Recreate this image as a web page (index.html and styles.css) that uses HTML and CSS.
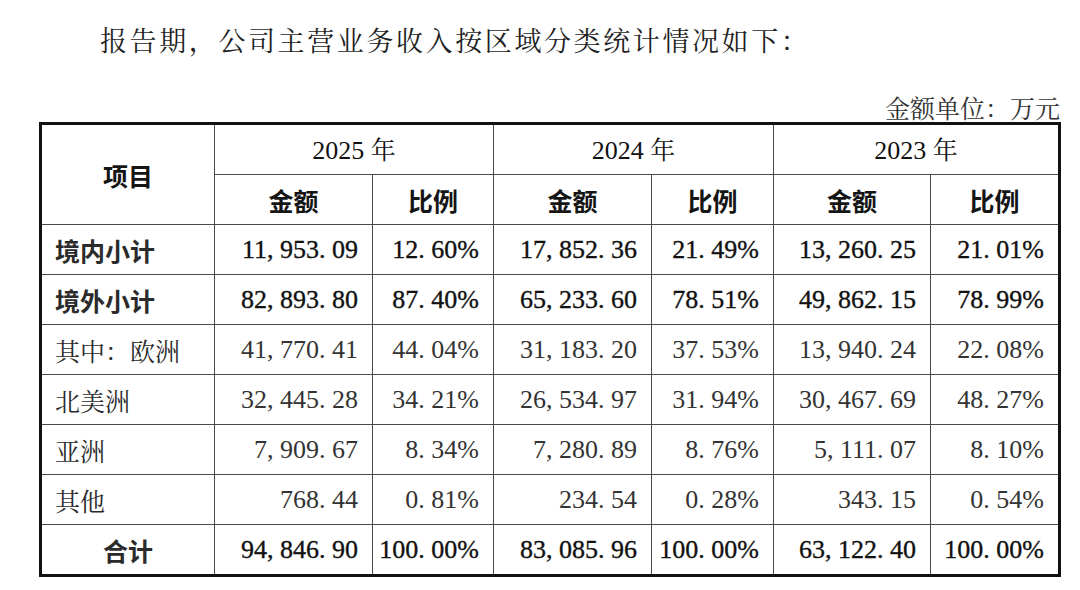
FILE: index.html
```html
<!DOCTYPE html>
<html lang="zh-CN">
<head>
<meta charset="utf-8">
<title>主营业务收入按区域分类</title>
<link rel="stylesheet" href="styles.css">
</head>
<body>
<div class="page">
  <p class="intro">报告期，公司主营业务收入按区域分类统计情况如下：</p>
  <p class="unit">金额单位：万元</p>
  <table class="data">
    <colgroup>
      <col class="c-label">
      <col class="c-amt">
      <col class="c-pct">
      <col class="c-amt">
      <col class="c-pct2">
      <col class="c-amt3">
      <col class="c-pct3">
    </colgroup>
    <thead>
      <tr class="h1">
        <th rowspan="2" class="hei">项目</th>
        <th colspan="2" class="year"><span class="num">2025</span> 年</th>
        <th colspan="2" class="year"><span class="num">2024</span> 年</th>
        <th colspan="2" class="year"><span class="num">2023</span> 年</th>
      </tr>
      <tr class="h2">
        <th class="hei">金额</th><th class="hei">比例</th>
        <th class="hei">金额</th><th class="hei">比例</th>
        <th class="hei">金额</th><th class="hei">比例</th>
      </tr>
    </thead>
    <tbody>
      <tr class="strong">
        <td class="label hei">境内小计</td>
        <td class="n">11, 953. 09</td><td class="n">12. 60%</td>
        <td class="n">17, 852. 36</td><td class="n">21. 49%</td>
        <td class="n">13, 260. 25</td><td class="n">21. 01%</td>
      </tr>
      <tr class="strong">
        <td class="label hei">境外小计</td>
        <td class="n">82, 893. 80</td><td class="n">87. 40%</td>
        <td class="n">65, 233. 60</td><td class="n">78. 51%</td>
        <td class="n">49, 862. 15</td><td class="n">78. 99%</td>
      </tr>
      <tr>
        <td class="label">其中：欧洲</td>
        <td class="n">41, 770. 41</td><td class="n">44. 04%</td>
        <td class="n">31, 183. 20</td><td class="n">37. 53%</td>
        <td class="n">13, 940. 24</td><td class="n">22. 08%</td>
      </tr>
      <tr>
        <td class="label">北美洲</td>
        <td class="n">32, 445. 28</td><td class="n">34. 21%</td>
        <td class="n">26, 534. 97</td><td class="n">31. 94%</td>
        <td class="n">30, 467. 69</td><td class="n">48. 27%</td>
      </tr>
      <tr>
        <td class="label">亚洲</td>
        <td class="n">7, 909. 67</td><td class="n">8. 34%</td>
        <td class="n">7, 280. 89</td><td class="n">8. 76%</td>
        <td class="n">5, 111. 07</td><td class="n">8. 10%</td>
      </tr>
      <tr>
        <td class="label">其他</td>
        <td class="n">768. 44</td><td class="n">0. 81%</td>
        <td class="n">234. 54</td><td class="n">0. 28%</td>
        <td class="n">343. 15</td><td class="n">0. 54%</td>
      </tr>
      <tr class="strong total">
        <td class="label center hei">合计</td>
        <td class="n">94, 846. 90</td><td class="n">100. 00%</td>
        <td class="n">83, 085. 96</td><td class="n">100. 00%</td>
        <td class="n">63, 122. 40</td><td class="n">100. 00%</td>
      </tr>
    </tbody>
  </table>
</div>
</body>
</html>
```

FILE: styles.css
```css
html, body {
  margin: 0;
  padding: 0;
  background: #ffffff;
}

body {
  font-family: "Noto Serif CJK SC", "Noto Sans CJK SC", serif;
  color: #222;
}

.page {
  width: 1080px;
  height: 590px;
  overflow: hidden;
}

.intro {
  margin: 0;
  padding: 24px 0 0 100px;
  font-size: 27px;
  line-height: 32px;
  letter-spacing: 2.6px;
  color: #1e1e1e;
}

.unit {
  margin: 36px 0 0 0;
  padding-right: 20px;
  text-align: right;
  font-size: 25px;
  line-height: 30px;
  color: #333;
}

.data {
  margin-left: 39px;
  width: 1019px;
  table-layout: fixed;
  border-collapse: collapse;
  border: 3px solid #111;
}

.c-label { width: 174px; }
.c-amt { width: 158px; }
.c-pct { width: 121px; }
.c-pct2 { width: 122px; }
.c-amt3 { width: 157px; }
.c-pct3 { width: 129px; }

.data th,
.data td {
  border: 1.5px solid #4a4a4a;
  padding: 0;
  vertical-align: middle;
  font-size: 25px;
  line-height: 30px;
  white-space: nowrap;
}

.data tr { height: 50px; }
.data tr.h1 { height: 51px; }
.data tr.total { height: 51px; }

.data th {
  font-weight: normal;
  text-align: center;
  color: #111;
}

.num {
  font-family: "Liberation Serif", serif;
  font-size: 26px;
}

.data .hei {
  font-family: "Noto Sans CJK SC", sans-serif;
  font-weight: 600;
  color: #151515;
}

.data td.label {
  text-align: left;
  padding-left: 13px;
  color: #2b2b2b;
}

.data td.label.center {
  text-align: center;
  padding-left: 0;
}

.data td.n {
  font-family: "Liberation Serif", "Noto Serif CJK SC", serif;
  font-size: 26px;
  text-align: right;
  padding-right: 14px;
  color: #333;
}

.data .strong td.n {
  color: #111;
  -webkit-text-stroke: 0.35px #111;
}
```
